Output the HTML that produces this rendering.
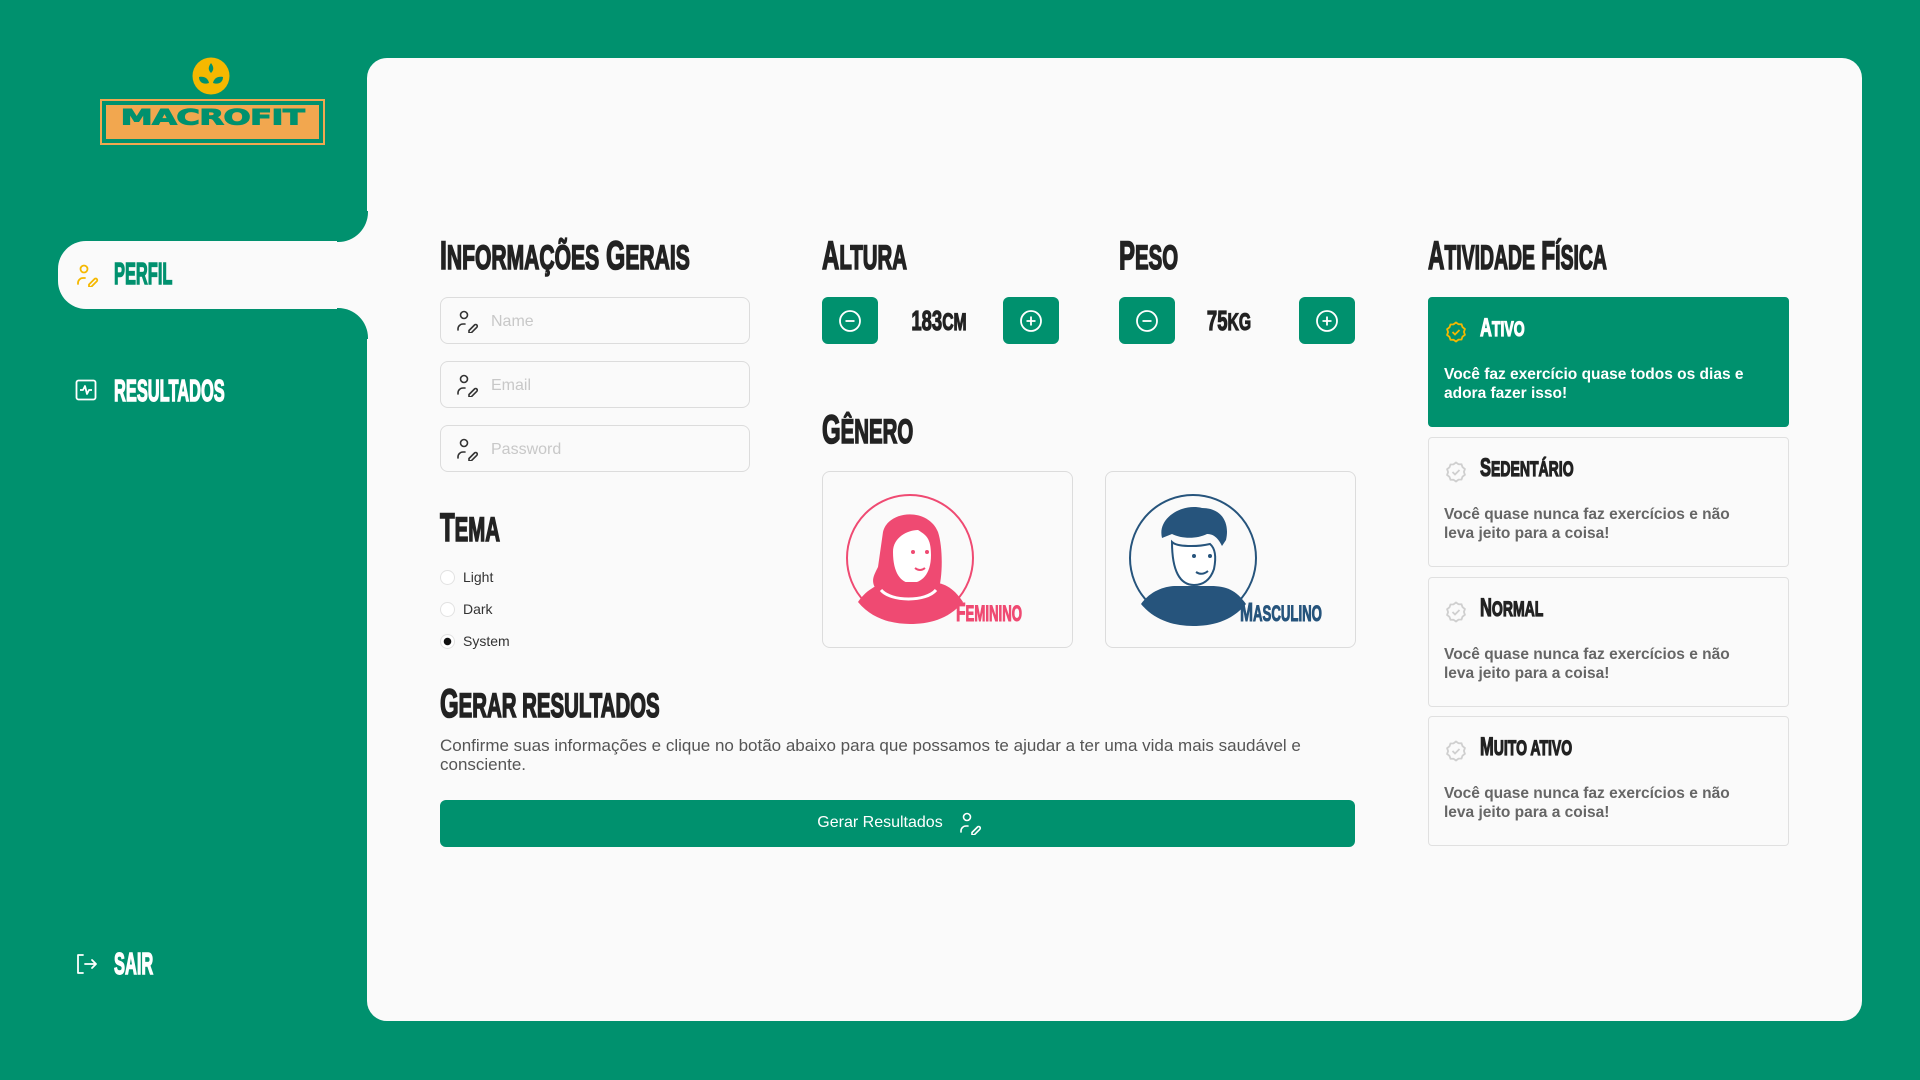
<!DOCTYPE html>
<html><head><meta charset="utf-8"><style>
*{margin:0;padding:0;box-sizing:border-box}
body{width:1920px;height:1080px;background:#00916e;position:relative;overflow:hidden;font-family:"Liberation Sans",sans-serif}
.abs{position:absolute}
.panel{left:367px;top:58px;width:1495px;height:963px;background:#fafafa;border-radius:20px}
.h{position:absolute;font-family:"Liberation Sans",sans-serif;font-weight:bold;font-size:40px;line-height:1;text-transform:uppercase;color:#222;transform:scaleX(.6);transform-origin:left top;white-space:nowrap;-webkit-text-stroke:1.6px #222}
.h s,.t s,.val s{text-decoration:none;font-size:0.85em}
.nav{position:absolute;font-weight:bold;font-size:31px;line-height:1;transform:scaleX(.53);transform-origin:left top;white-space:nowrap;color:#fff;-webkit-text-stroke:1.4px #fff}
.inp{position:absolute;left:440px;width:310px;height:47px;border:1.5px solid #dcdcdc;border-radius:8px;background:#fafafa}
.inp span{position:absolute;left:50px;top:15px;font-size:16px;color:#c8c8c8}
.inp svg{position:absolute;left:14px;top:11px}
.radio{position:absolute;left:440px;font-size:14px;color:#333}
.radio i{position:absolute;left:0;top:1px;width:15px;height:15px;border:1px solid #e2e2e2;border-radius:50%;background:#fff}
.radio span{position:absolute;left:23px;top:0;white-space:nowrap}
.btn{position:absolute;width:56px;height:47px;background:#00916e;border-radius:6px}
.btn svg{position:absolute;left:16px;top:12px}
.val{position:absolute;font-weight:bold;font-size:28px;line-height:1;transform:scaleX(.66);transform-origin:center top;color:#222;white-space:nowrap;text-align:center;width:120px;-webkit-text-stroke:1.2px #222}
.card{position:absolute;width:251px;height:177px;border:1.5px solid #dcdcdc;border-radius:8px;background:#fafafa}
.act{position:absolute;left:1428px;width:361px;height:130px;border:1.5px solid #e0e0e0;border-radius:4px;background:#fafafa}
.act .t{position:absolute;left:51px;top:18px;font-weight:bold;font-size:25px;text-transform:uppercase;line-height:1;transform:scaleX(.66);transform-origin:left top;white-space:nowrap;color:#222;-webkit-text-stroke:1.2px #222}
.act p{position:absolute;left:15px;top:67px;width:305px;font-size:15.5px;line-height:19px;color:#666;font-weight:bold}
.act svg{position:absolute;left:16px;top:23px}
</style></head><body>
<!-- logo -->
<svg class="abs" style="left:190px;top:57px" width="42" height="40" viewBox="0 0 42 40"><circle cx="21" cy="19" r="18.5" fill="#f5b800"/><path d="M21 6c3 4 3 7 0 10c-3-3-3-6 0-10z" fill="#00916e"/><path d="M19 26c-1-5-5-7-10-6c0 5 4 8 10 6z" fill="#00916e"/><path d="M23 26c1-5 5-7 10-6c0 5-4 8-10 6z" fill="#00916e"/></svg>
<div class="abs" style="left:100px;top:99px;width:225px;height:46px;border:2px solid #f2a74f"></div>
<div class="abs" style="left:106px;top:105px;width:213px;height:34px;background:#f2a74f"></div>
<div class="abs" style="left:106px;top:104px;width:213px;text-align:center;font-weight:900;font-size:32px;line-height:40px;color:#00916e;transform:scaleY(.66);transform-origin:center top;letter-spacing:-0.5px;font-family:'DejaVu Sans',sans-serif;-webkit-text-stroke:1.5px #00916e">MACROFIT</div>

<div class="abs panel"></div>
<!-- sidebar tab -->
<div class="abs" style="left:58px;top:241px;width:330px;height:68px;background:#fafafa;border-radius:28px 0 0 28px"></div>
<div class="abs" style="left:337px;top:211px;width:31px;height:31px;background:#fafafa"></div>
<div class="abs" style="left:337px;top:211px;width:31px;height:31px;background:#00916e;border-bottom-right-radius:30px"></div>
<div class="abs" style="left:337px;top:308px;width:31px;height:31px;background:#fafafa"></div>
<div class="abs" style="left:337px;top:308px;width:31px;height:31px;background:#00916e;border-top-right-radius:30px"></div>

<svg class="abs" style="left:75px;top:263px" width="24" height="24" viewBox="0 0 24 24" fill="none" stroke="#f5b800" stroke-width="1.8" stroke-linecap="round"><circle cx="9" cy="6" r="3.5"/><path d="M3 21v-1a5 5 0 0 1 5-5h2"/><path d="M14 21.5l5.5-5.5a1.6 1.6 0 0 1 2.3 2.3l-5.5 5.5h-2.3z"/></svg>
<div class="nav" style="left:114px;top:258px;color:#00916e;-webkit-text-stroke:1.4px #00916e">PERFIL</div>

<svg class="abs" style="left:75px;top:379px" width="22" height="22" viewBox="0 0 22 22" fill="none" stroke="#fff" stroke-width="1.8" stroke-linejoin="round"><rect x="1.5" y="1.5" width="19" height="19" rx="2"/><path d="M5 11h3l2-4 2 8 2-4h3"/></svg>
<div class="nav" style="left:114px;top:375px">RESULTADOS</div>

<svg class="abs" style="left:75px;top:953px" width="24" height="22" viewBox="0 0 24 22" fill="none" stroke="#fff" stroke-width="1.8" stroke-linecap="round" stroke-linejoin="round"><path d="M8 2H3v18h5"/><path d="M10 11h11M17 7l4 4-4 4"/></svg>
<div class="nav" style="left:114px;top:948px">SAIR</div>

<!-- Informações Gerais -->
<div class="h" style="left:440px;top:236px;transform:scaleX(.62)">I<s>nformações</s> G<s>erais</s></div>
<div class="inp" style="top:297px"><svg width="24" height="24" viewBox="0 0 24 24" fill="none" stroke="#333" stroke-width="1.6" stroke-linecap="round"><circle cx="9" cy="6" r="3.5"/><path d="M3 21v-1a5 5 0 0 1 5-5h2"/><path d="M14 21.5l5.5-5.5a1.6 1.6 0 0 1 2.3 2.3l-5.5 5.5h-2.3z"/></svg><span>Name</span></div>
<div class="inp" style="top:361px"><svg width="24" height="24" viewBox="0 0 24 24" fill="none" stroke="#333" stroke-width="1.6" stroke-linecap="round"><circle cx="9" cy="6" r="3.5"/><path d="M3 21v-1a5 5 0 0 1 5-5h2"/><path d="M14 21.5l5.5-5.5a1.6 1.6 0 0 1 2.3 2.3l-5.5 5.5h-2.3z"/></svg><span>Email</span></div>
<div class="inp" style="top:425px"><svg width="24" height="24" viewBox="0 0 24 24" fill="none" stroke="#333" stroke-width="1.6" stroke-linecap="round"><circle cx="9" cy="6" r="3.5"/><path d="M3 21v-1a5 5 0 0 1 5-5h2"/><path d="M14 21.5l5.5-5.5a1.6 1.6 0 0 1 2.3 2.3l-5.5 5.5h-2.3z"/></svg><span>Password</span></div>

<div class="h" style="left:440px;top:508px">T<s>ema</s></div>
<div class="radio" style="top:569px"><i></i><span>Light</span></div>
<div class="radio" style="top:601px"><i></i><span>Dark</span></div>
<div class="radio" style="top:633px"><i style="background:radial-gradient(circle,#111 0 3.5px,#fff 4px)"></i><span>System</span></div>

<!-- Altura / Peso -->
<div class="h" style="left:822px;top:236px">A<s>ltura</s></div>
<div class="btn" style="left:822px;top:297px"><svg width="24" height="24" viewBox="0 0 24 24" fill="none" stroke="#fff" stroke-width="1.8"><circle cx="12" cy="12" r="10"/><path d="M7.5 12h9"/></svg></div>
<div class="val" style="left:879px;top:307px">183<s>CM</s></div>
<div class="btn" style="left:1003px;top:297px"><svg width="24" height="24" viewBox="0 0 24 24" fill="none" stroke="#fff" stroke-width="1.8"><circle cx="12" cy="12" r="10"/><path d="M7.5 12h9M12 7.5v9"/></svg></div>

<div class="h" style="left:1119px;top:236px">P<s>eso</s></div>
<div class="btn" style="left:1119px;top:297px"><svg width="24" height="24" viewBox="0 0 24 24" fill="none" stroke="#fff" stroke-width="1.8"><circle cx="12" cy="12" r="10"/><path d="M7.5 12h9"/></svg></div>
<div class="val" style="left:1169px;top:307px">75<s>KG</s></div>
<div class="btn" style="left:1299px;top:297px"><svg width="24" height="24" viewBox="0 0 24 24" fill="none" stroke="#fff" stroke-width="1.8"><circle cx="12" cy="12" r="10"/><path d="M7.5 12h9M12 7.5v9"/></svg></div>

<!-- Gênero -->
<div class="h" style="left:822px;top:410px">G<s>ênero</s></div>
<div class="card" style="left:822px;top:471px">
<svg class="abs" style="left:20px;top:20px" width="140" height="140" viewBox="0 0 140 140"><circle cx="67" cy="66" r="63" fill="none" stroke="#ef4a72" stroke-width="2"/><path d="M40 40c5-22 45-25 55 0c5 15 5 45 0 60h-60c-8-10-5-15 0-25z" fill="#ef4a72"/><path d="M50 60c0-15 15-22 25-22c8 5 13 8 13 25c0 20-10 28-20 28c-10 0-18-10-18-31z" fill="#fff"/><path d="M15 110c10-15 25-20 35-20h35c15 0 25 5 35 20c-15 18-35 22-53 22s-38-5-52-22z" fill="#ef4a72"/><path d="M38 98c10 12 45 12 55 0" fill="none" stroke="#fff" stroke-width="3"/><circle cx="70" cy="60" r="2" fill="#ef4a72"/><circle cx="84" cy="60" r="2" fill="#ef4a72"/><path d="M72 76q5 4 10 0" stroke="#ef4a72" stroke-width="2" fill="none"/></svg>
<div class="abs" style="left:133px;top:127px;font-weight:bold;font-size:26px;line-height:1;text-transform:uppercase;color:#ef4a72;transform:scaleX(.6);transform-origin:left top;-webkit-text-stroke:1px #ef4a72;white-space:nowrap">F<span style="font-size:22px">eminino</span></div>
</div>
<div class="card" style="left:1105px;top:471px">
<svg class="abs" style="left:20px;top:20px" width="140" height="140" viewBox="0 0 140 140"><circle cx="67" cy="66" r="63" fill="none" stroke="#26547c" stroke-width="2"/><path d="M36 46c-5-20 20-35 40-30c20 0 28 15 24 32l-4 6c-5-10-10-12-15-12c-10 5-25 5-35 0z" fill="#26547c"/><path d="M46 50c5 5 25 5 38 2c6 5 6 15 4 25c-4 12-12 16-20 16c-14 0-22-14-22-43z" fill="#fff" stroke="#26547c" stroke-width="2"/><circle cx="68" cy="64" r="2" fill="#26547c"/><circle cx="84" cy="64" r="2" fill="#26547c"/><path d="M70 80q6 4 12 -1" stroke="#26547c" stroke-width="2" fill="none"/><path d="M15 112c10-14 25-18 35-18h35c15 0 25 4 35 18c-15 18-35 22-53 22s-38-5-52-22z" fill="#26547c"/></svg>
<div class="abs" style="left:134px;top:127px;font-weight:bold;font-size:26px;line-height:1;text-transform:uppercase;color:#26547c;transform:scaleX(.6);transform-origin:left top;-webkit-text-stroke:1px #26547c;white-space:nowrap">M<span style="font-size:22px">asculino</span></div>
</div>

<!-- Gerar resultados -->
<div class="h" style="left:440px;top:684px">G<s>erar resultados</s></div>
<div class="abs" style="left:440px;top:736px;width:880px;font-size:17px;line-height:19px;color:#555">Confirme suas informações e clique no botão abaixo para que possamos te ajudar a ter uma vida mais saudável e consciente.</div>
<div class="abs" style="left:440px;top:800px;width:915px;height:47px;background:#00916e;border-radius:6px">
<div class="abs" style="left:0;width:880px;top:14px;text-align:center;color:#fff;font-size:16px">Gerar Resultados</div>
<svg class="abs" style="left:518px;top:11px" width="24" height="24" viewBox="0 0 24 24" fill="none" stroke="#fff" stroke-width="1.6" stroke-linecap="round"><circle cx="9" cy="6" r="3.5"/><path d="M3 21v-1a5 5 0 0 1 5-5h2"/><path d="M14 21.5l5.5-5.5a1.6 1.6 0 0 1 2.3 2.3l-5.5 5.5h-2.3z"/></svg>
</div>

<!-- Atividade física -->
<div class="h" style="left:1428px;top:236px;transform:scaleX(.57)">A<s>tividade</s> F<s>ísica</s></div>
<div class="act" style="top:297px;background:#00916e;border-color:#00916e">
<svg width="22" height="22" viewBox="0 0 22 22" fill="none" stroke="#f5b800" stroke-width="1.8"><path d="M11 1.5l2.5 1.7 3 .1 1 2.8 2.4 1.9-1 2.9 1 2.9-2.4 1.9-1 2.8-3 .1L11 20.5l-2.5-1.7-3-.1-1-2.8-2.4-1.9 1-2.9-1-2.9 2.4-1.9 1-2.8 3-.1z"/><path d="M7.5 11l2.5 2.5 4.5-4.5"/></svg>
<div class="t" style="color:#fff;-webkit-text-stroke:1.2px #fff">A<s>tivo</s></div>
<p style="color:#fff">Você faz exercício quase todos os dias e adora fazer isso!</p></div>
<div class="act" style="top:437px">
<svg width="22" height="22" viewBox="0 0 22 22" fill="none" stroke="#cfcfcf" stroke-width="1.8"><path d="M11 1.5l2.5 1.7 3 .1 1 2.8 2.4 1.9-1 2.9 1 2.9-2.4 1.9-1 2.8-3 .1L11 20.5l-2.5-1.7-3-.1-1-2.8-2.4-1.9 1-2.9-1-2.9 2.4-1.9 1-2.8 3-.1z"/><path d="M7.5 11l2.5 2.5 4.5-4.5"/></svg>
<div class="t">S<s>edentário</s></div><p>Você quase nunca faz exercícios e não leva jeito para a coisa!</p></div>
<div class="act" style="top:577px">
<svg width="22" height="22" viewBox="0 0 22 22" fill="none" stroke="#cfcfcf" stroke-width="1.8"><path d="M11 1.5l2.5 1.7 3 .1 1 2.8 2.4 1.9-1 2.9 1 2.9-2.4 1.9-1 2.8-3 .1L11 20.5l-2.5-1.7-3-.1-1-2.8-2.4-1.9 1-2.9-1-2.9 2.4-1.9 1-2.8 3-.1z"/><path d="M7.5 11l2.5 2.5 4.5-4.5"/></svg>
<div class="t">N<s>ormal</s></div><p>Você quase nunca faz exercícios e não leva jeito para a coisa!</p></div>
<div class="act" style="top:716px">
<svg width="22" height="22" viewBox="0 0 22 22" fill="none" stroke="#cfcfcf" stroke-width="1.8"><path d="M11 1.5l2.5 1.7 3 .1 1 2.8 2.4 1.9-1 2.9 1 2.9-2.4 1.9-1 2.8-3 .1L11 20.5l-2.5-1.7-3-.1-1-2.8-2.4-1.9 1-2.9-1-2.9 2.4-1.9 1-2.8 3-.1z"/><path d="M7.5 11l2.5 2.5 4.5-4.5"/></svg>
<div class="t">M<s>uito ativo</s></div><p>Você quase nunca faz exercícios e não leva jeito para a coisa!</p></div>
</body></html>
